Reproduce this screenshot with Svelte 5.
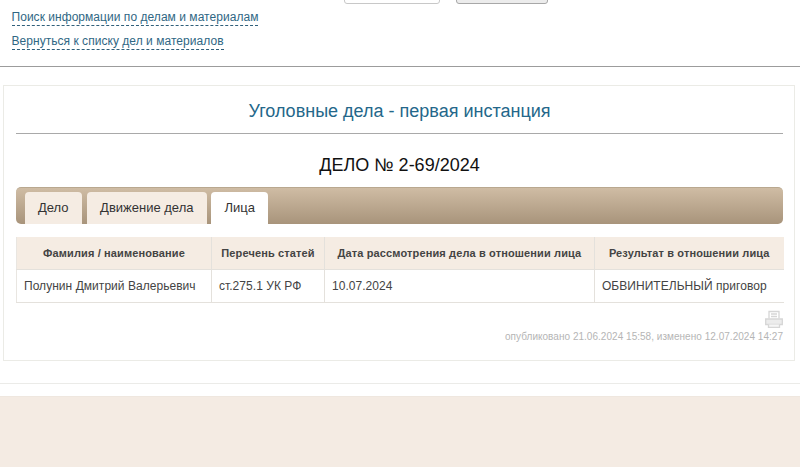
<script>
  const tabs = [
    { label: 'Дело', active: false },
    { label: 'Движение дела', active: false },
    { label: 'Лица', active: true }
  ];
</script>

<div class="page">
  <header class="top">
    <div class="buttons">
      <span class="btn one"></span>
      <span class="btn two"></span>
    </div>
    <nav class="links">
      <a href="#a">Поиск информации по делам и материалам</a>
      <a href="#b">Вернуться к списку дел и материалов</a>
    </nav>
  </header>

  <main class="card">
    <h1>Уголовные дела - первая инстанция</h1>
    <h2>ДЕЛО № 2-69/2024</h2>
    <div class="tabs">
      {#each tabs as t}
        <span class="tab" class:active={t.active}>{t.label}</span>
      {/each}
    </div>
    <table>
      <thead>
        <tr>
          <th class="c1">Фамилия / наименование</th>
          <th class="c2">Перечень статей</th>
          <th class="c3">Дата рассмотрения дела в отношении лица</th>
          <th class="c4">Результат в отношении лица</th>
        </tr>
      </thead>
      <tbody>
        <tr>
          <td>Полунин Дмитрий Валерьевич</td>
          <td>ст.275.1 УК РФ</td>
          <td>10.07.2024</td>
          <td>ОБВИНИТЕЛЬНЫЙ приговор</td>
        </tr>
      </tbody>
    </table>
    <div class="print">
      <svg width="18" height="18" viewBox="0 0 18 18" fill="none" stroke="#d6d6d6" stroke-width="1.3">
        <path d="M4 8.500V1.500h10v7" />
        <path d="M6 4h6M6 6.500h6" />
        <path d="M.7 9h16.600v5.500H.7z" fill="#ececec" />
        <path d="M3.500 14.500v2.800h11v-2.800" fill="#f6f6f6" />
      </svg>
    </div>
    <p class="meta">опубликовано 21.06.2024 15:58, изменено 12.07.2024 14:27</p>
  </main>

  <div class="rule"></div>
  <footer class="footer"></footer>
</div>

<style>
  :global(body) {
    margin: 0;
    background: #fff;
  }
  .page {
    width: 800px;
    height: 467px;
    overflow: hidden;
    font-family: "Liberation Sans", Arial, sans-serif;
    display: flex;
    flex-direction: column;
  }
  .top {
    height: 66px;
    border-bottom: 1px solid #9c9c9c;
    flex: none;
  }
  .buttons {
    height: 4px;
    display: flex;
    align-items: flex-end;
    gap: 16px;
    padding-left: 344px;
    overflow: hidden;
  }
  .btn {
    display: block;
    height: 12px;
    box-sizing: border-box;
    border: 1px solid #c8c8c8;
    border-radius: 3px;
    flex: none;
  }
  .one { width: 96px; background: #fff; }
  .two { width: 92px; background: #ececec; border-color: #a8a8a8; }
  .links {
    display: flex;
    flex-direction: column;
    align-items: flex-start;
    gap: 8px;
    padding: 6px 0 0 11.500px;
  }
  .links a {
    font-size: 12px;
    line-height: 15px;
    letter-spacing: 0.04px;
    color: #2f6784;
    text-decoration: none;
    border-bottom: 1px dashed #2f5f7a;
  }
  .card {
    margin: 18px 5px 0 3px;
    height: 276px;
    box-sizing: border-box;
    flex: none;
    border: 1px solid #ebebe6;
    padding: 0 11px 0 12px;
  }
  h1 {
    margin: 0;
    height: 48px;
    box-sizing: border-box;
    padding-top: 14px;
    border-bottom: 1px solid #a9a9a9;
    font-size: 18px;
    line-height: 22px;
    font-weight: 400;
    color: #24678a;
    text-align: center;
  }
  h2 {
    margin: 0;
    padding-top: 20px;
    font-size: 18px;
    line-height: 22px;
    font-weight: 400;
    color: #111;
    text-align: center;
  }
  .tabs {
    margin-top: 11px;
    height: 37px;
    box-sizing: border-box;
    padding: 5px 0 0 9px;
    display: flex;
    gap: 5px;
    border-radius: 5px;
    border-top: 1px solid #b9a88f;
    background: linear-gradient(#cfbca4, #a8947b);
  }
  .tab {
    height: 32px;
    padding: 0 13px;
    font-size: 13px;
    line-height: 32px;
    color: #333;
    background: #f5ece3;
    border-radius: 4px 4px 0 0;
    margin-top: -1px;
  }
  .tab:nth-child(n + 2) {
    padding: 0 13.500px;
  }
  .tab.active {
    background: #fff;
    margin-left: -1px;
  }
  table {
    margin-top: 13px;
    width: 767px;
    border-collapse: collapse;
    table-layout: fixed;
  }
  th, td {
    border: 1px solid #e4e1dc;
    border-top: 0;
    border-left: 0;
    padding: 0;
    box-sizing: border-box;
  }
  tr > :first-child { border-left: 1px solid #e9e6e1; }
  tr > :last-child { border-right: 0; }
  th {
    height: 32px;
    font-size: 11px;
    font-weight: 700;
    color: #444;
    letter-spacing: 0.13px;
    background: #f5ece3;
    text-align: center;
  }
  td {
    height: 33px;
    font-size: 12px;
    letter-spacing: 0.04px;
    color: #444;
    padding-left: 7px;
  }
  .c1 { width: 195px; }
  .c2 { width: 113px; }
  .c3 { width: 270px; }
  .c4 { width: 189px; }
  .print {
    margin-top: 7px;
    height: 18px;
    display: flex;
    justify-content: flex-end;
  }
  .meta {
    margin: 2px 0 0;
    font-size: 10px;
    line-height: 14px;
    letter-spacing: 0.03px;
    color: #b5b5b5;
    text-align: right;
  }
  .rule {
    margin-top: 22px;
    height: 1px;
    background: #ebebe8;
    flex: none;
  }
  .footer {
    margin-top: 12px;
    flex: 1;
    background: #f4ebe3;
    border-top: 1px solid #efe7df;
  }
</style>
